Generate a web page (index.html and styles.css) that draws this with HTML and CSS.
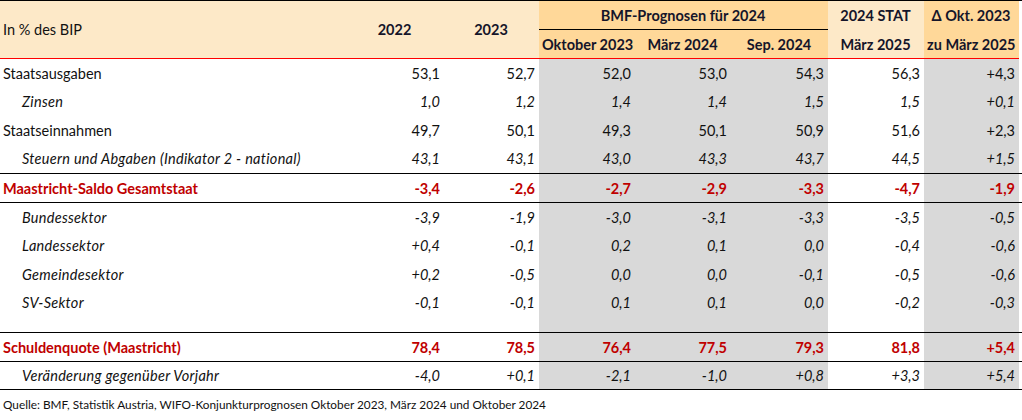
FILE: index.html
```html
<!DOCTYPE html>
<html lang="de">
<head>
<meta charset="utf-8">
<title>Maastricht-Indikatoren</title>
<link rel="stylesheet" href="styles.css">
</head>
<body>
<table class="fiscal">
  <colgroup>
    <col class="c-lab">
    <col class="c-y22">
    <col class="c-y23">
    <col class="c-g">
    <col class="c-g">
    <col class="c-g c-sep">
    <col class="c-stat">
    <col class="c-g c-d">
    <col class="c-pad">
  </colgroup>
  <thead>
    <tr class="h1">
      <th rowspan="2" class="lab">In % des BIP</th>
      <th rowspan="2" class="light">2022</th>
      <th rowspan="2" class="light">2023</th>
      <th colspan="3" class="dark bmf">BMF-Prognosen für 2024</th>
      <th class="light">2024 STAT</th>
      <th class="dark">Δ Okt. 2023</th>
      <th rowspan="2" class="pad"></th>
    </tr>
    <tr class="h2">
      <th class="dark">Oktober 2023</th>
      <th class="dark">März 2024</th>
      <th class="dark">Sep. 2024</th>
      <th class="light">März 2025</th>
      <th class="dark">zu März 2025</th>
    </tr>
  </thead>
  <tbody>
    <tr>
      <td class="lab">Staatsausgaben</td>
      <td>53,1</td><td>52,7</td><td>52,0</td><td>53,0</td><td>54,3</td><td>56,3</td><td>+4,3</td><td class="pad"></td>
    </tr>
    <tr class="it">
      <td class="lab">Zinsen</td>
      <td>1,0</td><td>1,2</td><td>1,4</td><td>1,4</td><td>1,5</td><td>1,5</td><td>+0,1</td><td class="pad"></td>
    </tr>
    <tr>
      <td class="lab">Staatseinnahmen</td>
      <td>49,7</td><td>50,1</td><td>49,3</td><td>50,1</td><td>50,9</td><td>51,6</td><td>+2,3</td><td class="pad"></td>
    </tr>
    <tr class="it">
      <td class="lab">Steuern und Abgaben (Indikator 2 - national)</td>
      <td>43,1</td><td>43,1</td><td>43,0</td><td>43,3</td><td>43,7</td><td>44,5</td><td>+1,5</td><td class="pad"></td>
    </tr>
    <tr class="key">
      <td class="lab">Maastricht-Saldo Gesamtstaat</td>
      <td>-3,4</td><td>-2,6</td><td>-2,7</td><td>-2,9</td><td>-3,3</td><td>-4,7</td><td>-1,9</td><td class="pad"></td>
    </tr>
    <tr class="it">
      <td class="lab">Bundessektor</td>
      <td>-3,9</td><td>-1,9</td><td>-3,0</td><td>-3,1</td><td>-3,3</td><td>-3,5</td><td>-0,5</td><td class="pad"></td>
    </tr>
    <tr class="it">
      <td class="lab">Landessektor</td>
      <td>+0,4</td><td>-0,1</td><td>0,2</td><td>0,1</td><td>0,0</td><td>-0,4</td><td>-0,6</td><td class="pad"></td>
    </tr>
    <tr class="it">
      <td class="lab">Gemeindesektor</td>
      <td>+0,2</td><td>-0,5</td><td>0,0</td><td>0,0</td><td>-0,1</td><td>-0,5</td><td>-0,6</td><td class="pad"></td>
    </tr>
    <tr class="it">
      <td class="lab">SV-Sektor</td>
      <td>-0,1</td><td>-0,1</td><td>0,1</td><td>0,1</td><td>0,0</td><td>-0,2</td><td>-0,3</td><td class="pad"></td>
    </tr>
    <tr class="blank">
      <td class="lab"></td><td></td><td></td><td></td><td></td><td></td><td></td><td></td><td class="pad"></td>
    </tr>
    <tr class="key">
      <td class="lab">Schuldenquote (Maastricht)</td>
      <td>78,4</td><td>78,5</td><td>76,4</td><td>77,5</td><td>79,3</td><td>81,8</td><td>+5,4</td><td class="pad"></td>
    </tr>
    <tr class="it last">
      <td class="lab">Veränderung gegenüber Vorjahr</td>
      <td>-4,0</td><td>+0,1</td><td>-2,1</td><td>-1,0</td><td>+0,8</td><td>+3,3</td><td>+5,4</td><td class="pad"></td>
    </tr>
  </tbody>
</table>
<p class="source">Quelle: BMF, Statistik Austria, WIFO-Konjunkturprognosen Oktober 2023, März 2024 und Oktober 2024</p>
</body>
</html>
```
FILE: styles.css
```css
html, body {
  margin: 0;
  padding: 0;
  background: #ffffff;
}

body {
  font-family: Lato, "Liberation Sans", sans-serif;
  color: #111111;
  width: 1022px;
  height: 420px;
  overflow: hidden;
}

.fiscal {
  border-collapse: separate;
  border-spacing: 0;
  table-layout: fixed;
  width: 1022px;
  font-size: 14.5px;
}

.c-lab { width: 346px; }
.c-y22 { width: 98px; }
.c-y23 { width: 95px; }
.c-g { width: 96px; background: #d9d9d9; }
.c-sep { width: 97px; }
.c-stat { width: 96px; }
.c-d { width: 95px; }
.c-pad { width: 3px; background: #ffffff; }

.fiscal th,
.fiscal td {
  padding: 0 4px 0 3px;
  white-space: nowrap;
  overflow: hidden;
}

/* header */
.fiscal th {
  font-weight: 700;
  text-align: center;
  vertical-align: middle;
  color: #15152a;
}

.h1 { height: 30px; }
.h2 { height: 29px; }

.h1 th { border-top: 1px solid #000000; }
.h1 th[rowspan],
.h2 th { border-bottom: 1px solid #ff0000; }
.h1 th.pad { border-bottom: 0; background: #ffffff; }

.fiscal th.lab {
  text-align: left;
  font-weight: 400;
  color: #111111;
}

.light { background: #fde9c8; }
.dark { background: #ffd899; }
th.lab { background: #fde9c8; }

.bmf { border-bottom: 1px solid #000000; }

/* body */
.fiscal tbody tr { height: 28.5px; }

.fiscal td {
  text-align: right;
  vertical-align: middle;
}

.fiscal td.lab {
  text-align: left;
  padding-left: 3px;
}

.it td { font-style: italic; }
.it td.lab {
  padding-left: 22px;
  letter-spacing: 0.28px;
}

.fiscal tr.key { height: 30px; }
.key td {
  color: #c00000;
  font-weight: 700;
  border-top: 1px solid #000000;
  border-bottom: 1px solid #000000;
}

.fiscal tr.blank { height: 15px; }

.fiscal tr.last { height: 28px; }
.last td { border-bottom: 1px solid #000000; }

.fiscal td.pad { padding: 0; }

.source {
  margin: 0;
  height: 30px;
  line-height: 30px;
  padding-left: 3px;
  font-size: 11.8px;
  color: #111111;
}
```
